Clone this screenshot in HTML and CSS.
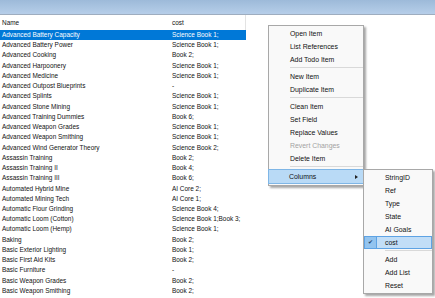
FILE: index.html
```html
<!DOCTYPE html>
<html lang="en">
<head>
    <meta charset="UTF-8">
    <title>Research Editor</title>
    <link rel="stylesheet" href="styles.css">
</head>
<body>
    <div class="titlebar"></div>

    <div class="list">
        <div class="row header"><span>Name</span><span class="last">cost</span></div>
        <div class="row selected"><span>Advanced Battery Capacity</span><span>Science Book 1;</span></div>
        <div class="row"><span>Advanced Battery Power</span><span>Science Book 1;</span></div>
        <div class="row"><span>Advanced Cooking</span><span>Book 2;</span></div>
        <div class="row"><span>Advanced Harpoonery</span><span>Science Book 1;</span></div>
        <div class="row"><span>Advanced Medicine</span><span>Science Book 1;</span></div>
        <div class="row"><span>Advanced Outpost Blueprints</span><span>-</span></div>
        <div class="row"><span>Advanced Splints</span><span>Science Book 1;</span></div>
        <div class="row"><span>Advanced Stone Mining</span><span>Science Book 1;</span></div>
        <div class="row"><span>Advanced Training Dummies</span><span>Book 6;</span></div>
        <div class="row"><span>Advanced Weapon Grades</span><span>Science Book 1;</span></div>
        <div class="row"><span>Advanced Weapon Smithing</span><span>Science Book 1;</span></div>
        <div class="row"><span>Advanced Wind Generator Theory</span><span>Science Book 2;</span></div>
        <div class="row"><span>Assassin Training</span><span>Book 2;</span></div>
        <div class="row"><span>Assassin Training II</span><span>Book 4;</span></div>
        <div class="row"><span>Assassin Training III</span><span>Book 6;</span></div>
        <div class="row"><span>Automated Hybrid Mine</span><span>AI Core 2;</span></div>
        <div class="row"><span>Automated Mining Tech</span><span>AI Core 1;</span></div>
        <div class="row"><span>Automatic Flour Grinding</span><span>Science Book 4;</span></div>
        <div class="row"><span>Automatic Loom (Cotton)</span><span>Science Book 1;Book 3;</span></div>
        <div class="row"><span>Automatic Loom (Hemp)</span><span>Science Book 1;</span></div>
        <div class="row"><span>Baking</span><span>Book 2;</span></div>
        <div class="row"><span>Basic Exterior Lighting</span><span>Book 1;</span></div>
        <div class="row"><span>Basic First Aid Kits</span><span>Book 2;</span></div>
        <div class="row"><span>Basic Furniture</span><span>-</span></div>
        <div class="row"><span>Basic Weapon Grades</span><span>Book 2;</span></div>
        <div class="row"><span>Basic Weapon Smithing</span><span>Book 2;</span></div>
    </div>

    <div class="menu main-menu">
        <div class="item">Open Item</div>
        <div class="item">List References</div>
        <div class="item">Add Todo Item</div>
        <div class="sep"></div>
        <div class="item">New Item</div>
        <div class="item">Duplicate Item</div>
        <div class="sep"></div>
        <div class="item">Clean Item</div>
        <div class="item">Set Field</div>
        <div class="item">Replace Values</div>
        <div class="item disabled">Revert Changes</div>
        <div class="item">Delete Item</div>
        <div class="sep"></div>
        <div class="item open">Columns<span class="arrow"></span></div>
    </div>

    <div class="menu sub-menu">
        <div class="item">StringID</div>
        <div class="item">Ref</div>
        <div class="item">Type</div>
        <div class="item">State</div>
        <div class="item">AI Goals</div>
        <div class="item checked"><span class="check">&#10004;</span>cost</div>
        <div class="sep"></div>
        <div class="item">Add</div>
        <div class="item">Add List</div>
        <div class="item">Reset</div>
    </div>
</body>
</html>
```

FILE: styles.css
```css
body {
    margin: 0;
    background: #fff;
    font-family: "Liberation Sans", Arial, sans-serif;
    color: #111;
    overflow: hidden;
}
.titlebar {
    height: 14px;
    background: linear-gradient(#9dbad9, #b6cee9);
    border-bottom: 1px solid #9eadbf;
}
.list {
    width: 246px;
}
.row {
    display: grid;
    grid-template-columns: 170px 76px;
    height: 10.24px;
    line-height: 10.24px;
    font-size: 6.45px;
    white-space: nowrap;
}
.row span {
    padding-left: 2px;
    overflow: hidden;
}
.row.header {
    height: 15px;
    line-height: 15px;
}
.row.header .last {
    border-right: 1px solid #e3e3e3;
}
.row.selected {
    background: #0078d7;
    color: #fff;
}
.menu {
    position: absolute;
    background: #f9f9f9;
    border: 1px solid #a8a8a8;
    box-shadow: 2px 2px 2px rgba(0, 0, 0, 0.35);
    padding: 1px 0;
    font-size: 6.9px;
    color: #111;
}
.main-menu {
    left: 268px;
    top: 25px;
    width: 94px;
}
.sub-menu {
    left: 363px;
    top: 169px;
    width: 68px;
}
.item {
    position: relative;
    height: 13px;
    line-height: 13px;
    padding-left: 21px;
    white-space: nowrap;
}
.item.disabled {
    color: #a3a3a3;
}
.sep {
    height: 4px;
    margin-left: 21px;
    position: relative;
}
.sep::after {
    content: "";
    position: absolute;
    left: 0;
    right: 0;
    top: 1px;
    border-top: 1px solid #d9d9d9;
}
.item.open {
    height: 13px;
    background: #b9daf6;
    border: 1px solid #7fb6e6;
    padding-left: 20px;
    margin: 0 -1px;
}
.arrow {
    position: absolute;
    right: 5px;
    top: 5px;
    border-left: 3px solid #222;
    border-top: 2px solid transparent;
    border-bottom: 2px solid transparent;
}
.item.checked {
    background: #c2def7;
    border: 1px solid #5ea3e4;
    height: 11px;
    line-height: 11px;
    padding-left: 20px;
}
.check {
    position: absolute;
    left: 0;
    top: 0;
    width: 11px;
    height: 11px;
    background: #93c4ef;
    border-right: 1px solid #5ea3e4;
    font-size: 6px;
    text-align: center;
    line-height: 11px;
    color: #1d3f66;
}
```
